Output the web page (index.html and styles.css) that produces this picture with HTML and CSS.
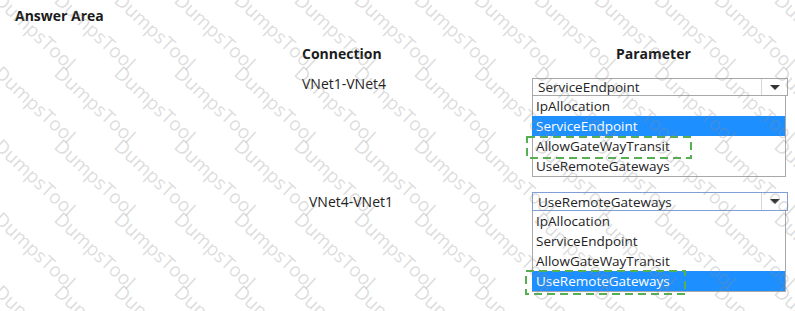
FILE: index.html
```html
<!DOCTYPE html>
<html lang="en">

<head>
    <meta charset="UTF-8">
    <meta name="viewport" content="width=device-width, initial-scale=1.0">
    <title>Answer Area</title>
    <link rel="stylesheet" href="styles.css">
</head>

<body>
    <h1 class="title">Answer Area</h1>
    <div class="answer-grid">
        <div class="col-head">Connection</div>
        <div class="col-head param">Parameter</div>

        <div class="conn first">VNet1-VNet4</div>
        <div class="dropdown">
            <div class="select">
                <span class="value">ServiceEndpoint</span>
                <span class="arrow-box"><span class="arrow"></span></span>
            </div>
            <ul class="options">
                <li>IpAllocation</li>
                <li class="selected">ServiceEndpoint</li>
                <li class="answer">AllowGateWayTransit
                    <svg class="mark-box first-mark" width="166" height="23">
                        <rect x="1" y="1" width="164" height="21" fill="none" stroke="#55b04f" stroke-width="2" stroke-dasharray="8 5"/>
                    </svg>
                </li>
                <li>UseRemoteGateways</li>
            </ul>
        </div>

        <div class="conn second">VNet4-VNet1</div>
        <div class="dropdown focused">
            <div class="select">
                <span class="value">UseRemoteGateways</span>
                <span class="arrow-box"><span class="arrow"></span></span>
            </div>
            <ul class="options">
                <li>IpAllocation</li>
                <li>ServiceEndpoint</li>
                <li>AllowGateWayTransit</li>
                <li class="selected answer">UseRemoteGateways
                    <svg class="mark-box second-mark" width="161" height="25">
                        <rect x="1" y="1" width="159" height="23" fill="none" stroke="#55b04f" stroke-width="2" stroke-dasharray="8 5"/>
                    </svg>
                </li>
            </ul>
        </div>
    </div>

    <div class="watermark"></div>
    <script src="watermark.js"></script>
</body>

</html>
```

FILE: styles.css
```css
* {
    box-sizing: border-box;
}

body {
    margin: 0;
    width: 795px;
    height: 311px;
    overflow: hidden;
    position: relative;
    background-color: #fff;
    font-family: "Open Sans", "Noto Sans", sans-serif;
    color: #1b1b1b;
}

.title {
    margin: 0;
    padding: 7px 0 0 15px;
    font-size: 14px;
    line-height: 18px;
    font-weight: 700;
}

.answer-grid {
    display: grid;
    grid-template-columns: 230px 256px;
    grid-template-rows: 18px auto auto;
    row-gap: 15px;
    margin: 20px 0 0 302px;
}

.col-head {
    font-size: 14px;
    line-height: 18px;
    font-weight: 700;
}

.col-head.param {
    padding-left: 84px;
}

.conn {
    font-size: 14px;
    line-height: 18px;
    color: #222;
}

.conn.first {
    margin-top: -3px;
}

.conn.second {
    padding-left: 7px;
    margin-top: 1px;
}

/* Dropdown styles */
.select {
    height: 18px;
    border: 1px solid #a8a8a8;
    display: flex;
    align-items: center;
    background-color: #fff;
}

.dropdown.focused .select {
    height: 19px;
    border-color: #7f9fd6;
}

.value {
    flex: 1;
    padding-left: 5px;
    font-size: 13.5px;
    line-height: 16px;
    color: #222;
}

.arrow-box {
    width: 26px;
    align-self: stretch;
    border-left: 1px solid #d6d6d6;
    display: flex;
    align-items: center;
    justify-content: center;
}

.arrow {
    width: 0;
    height: 0;
    border-left: 5px solid transparent;
    border-right: 5px solid transparent;
    border-top: 5px solid #333;
}

.options {
    list-style-type: none;
    margin: 0 2px 0 0;
    padding: 0;
    border: 1px solid #a8a8a8;
    border-top: 0;
    background-color: #fff;
}

.options li {
    position: relative;
    height: 20px;
    line-height: 20px;
    padding-left: 3px;
    font-size: 13.5px;
    color: #222;
    white-space: nowrap;
}

.options li.selected {
    background-color: #1e8fff;
    color: #fff;
    margin-left: -1px;
    padding-left: 4px;
}

.mark-box {
    position: absolute;
    pointer-events: none;
}

.first-mark {
    left: -7px;
    top: 0;
}

.second-mark {
    left: -7px;
    top: -1px;
}

/* Watermark overlay */
.watermark {
    position: absolute;
    top: 0;
    left: 0;
    width: 100%;
    height: 100%;
    overflow: hidden;
    pointer-events: none;
}

.wm {
    position: absolute;
    font-family: "Open Sans", sans-serif;
    font-size: 19px;
    line-height: 1;
    white-space: nowrap;
    color: rgba(140, 140, 140, 0.3);
    transform: rotate(43deg);
    transform-origin: 0 0;
}
```

FILE: watermark.js
```js
// Repeating "DumpsTool" stamp over the whole picture
const layer = document.querySelector('.watermark');
const stepX = 60;
const stepY = 73;

for (let row = 0; row < 6; row++) {
    for (let col = 0; col < 14; col++) {
        const mark = document.createElement('span');
        mark.className = 'wm';
        mark.textContent = 'DumpsTool';
        mark.style.left = `${4 + col * stepX}px`;
        mark.style.top = `${-10 + row * stepY}px`;
        layer.appendChild(mark);
    }
}
```
